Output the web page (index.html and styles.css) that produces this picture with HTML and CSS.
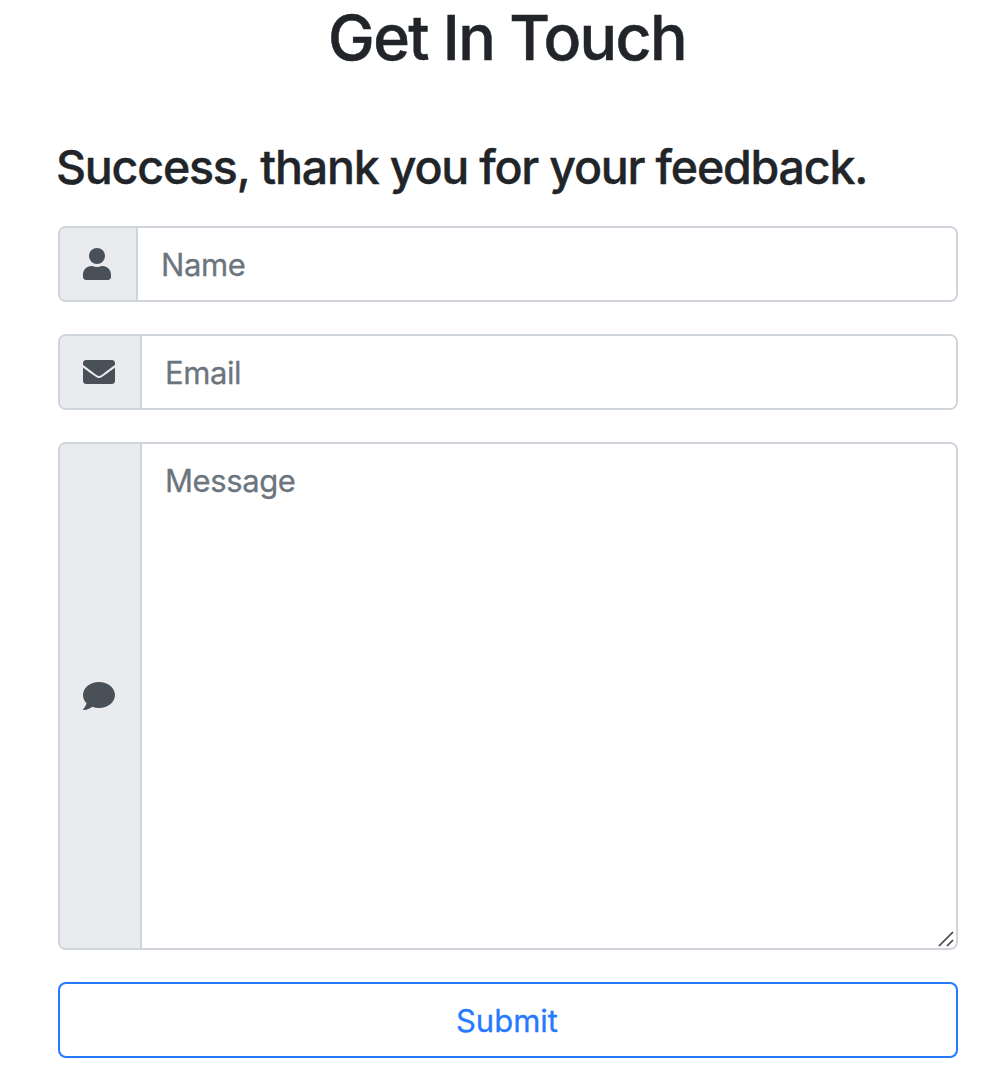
FILE: index.html
```html
<!DOCTYPE html>
<html lang="en">
<head>
<meta charset="utf-8">
<title>Get In Touch</title>
<link rel="stylesheet" href="styles.css">
</head>
<body>
<main class="contact">
  <h1 class="title">Get In Touch</h1>
  <h2 class="notice">Success, thank you for your feedback.</h2>
  <form class="form">
    <div class="group">
      <span class="addon"><svg width="28" height="32" viewBox="0 0 28 32"><circle cx="14" cy="8" r="8"/><path d="M8.4 18h1.04c1.4.64 2.94 1 4.56 1s3.17-.36 4.56-1h1.04c4.64 0 8.4 3.76 8.4 8.4V29c0 1.66-1.34 3-3 3H3c-1.66 0-3-1.34-3-3v-2.6C0 21.76 3.76 18 8.4 18z"/></svg></span>
      <input class="control" type="text" placeholder="Name" aria-label="Name">
    </div>
    <div class="group">
      <span class="addon"><svg width="32" height="32" viewBox="0 0 512 512"><path d="M502.3 190.8c3.9-3.1 9.7-.2 9.7 4.7V400c0 26.5-21.5 48-48 48H48c-26.5 0-48-21.5-48-48V195.6c0-5 5.7-7.8 9.7-4.7 22.4 17.4 52.1 39.5 154.1 113.6 21.1 15.4 56.7 47.8 92.2 47.6 35.7.3 72-32.8 92.3-47.6 102-74.1 131.6-96.3 154-113.7zM256 320c23.2.4 56.6-29.2 73.4-41.4 132.7-96.3 142.8-104.7 173.4-128.7 5.8-4.5 9.2-11.5 9.2-18.9v-19c0-26.5-21.5-48-48-48H48c-26.5 0-48 21.5-48 48v19c0 7.4 3.4 14.3 9.2 18.9 30.6 23.9 40.7 32.4 173.4 128.7 16.8 12.2 50.2 41.8 73.4 41.4z"/></svg></span>
      <input class="control" type="email" placeholder="Email" aria-label="Email">
    </div>
    <div class="group message">
      <span class="addon"><svg width="32" height="32" viewBox="0 0 512 512"><path d="M256 32C114.6 32 0 125.1 0 240c0 49.6 21.4 95 57 130.700C44.5 421.1 2.7 466 2.2 466.5c-2.2 2.3-2.8 5.7-1.5 8.7S4.800 480 8 480c66.3 0 116-31.8 140.6-51.4 32.7 12.3 69 19.4 107.4 19.4 141.4 0 256-93.1 256-208S397.4 32 256 32z"/></svg></span>
      <textarea class="control" placeholder="Message" aria-label="Message"></textarea>
      <svg class="grip" width="16" height="16" viewBox="0 0 16 16"><path d="M1 15 15 1M9 15l6-6"/></svg>
    </div>
    <button class="submit" type="button">Submit</button>
  </form>
</main>
</body>
</html>
```
FILE: styles.css
```css
* {
  box-sizing: border-box;
}

body {
  margin: 0;
  background: #fff;
  color: #212529;
  font-family: Inter, "Liberation Sans", sans-serif;
}

.contact {
  padding: 0 50px 0 58px;
}

.title {
  margin: 0;
  height: 75px;
  font-size: 62.5px;
  font-weight: 500;
  line-height: 74px;
  letter-spacing: -1.65px;
  text-align: center;
  text-indent: -2px;
  -webkit-text-stroke: 0.5px;
}

.notice {
  margin: 63px 0 30px -2px;
  height: 58px;
  font-size: 46.5px;
  font-weight: 500;
  line-height: 58px;
  letter-spacing: -1.2px;
  white-space: nowrap;
  -webkit-text-stroke: 0.4px;
}

.form {
  display: flex;
  flex-direction: column;
  gap: 32px;
}

.group {
  position: relative;
  display: flex;
  height: 76px;
  border: 2px solid #ced4da;
  border-radius: 8px;
  overflow: hidden;
}

.message {
  height: 508px;
}

.addon {
  display: flex;
  align-items: center;
  padding: 0 25px 0 23px;
  border-right: 2px solid #ced4da;
  background: #e9ebef;
}

.addon svg {
  display: block;
  fill: #495057;
}

.control {
  flex: 1;
  min-width: 0;
  margin: 0;
  padding: 13px 23px 11px;
  border: 0;
  outline: 0;
  background: #fff;
  color: #495057;
  font: 400 31px/48px Inter, "Liberation Sans", sans-serif;
  letter-spacing: -0.4px;
  resize: none;
  -webkit-text-stroke: 0.3px;
}

.control::placeholder {
  color: #6c757d;
  opacity: 1;
}

.grip {
  position: absolute;
  right: 2px;
  bottom: 1px;
  fill: none;
  stroke: #444;
  stroke-width: 1.7;
}

.submit {
  height: 76px;
  padding: 1px 2px 0 0;
  border: 2px solid #267aff;
  border-radius: 8px;
  background: #fff;
  color: #267aff;
  font: 400 31px/48px Inter, "Liberation Sans", sans-serif;
  -webkit-text-stroke: 0.3px;
}
```
